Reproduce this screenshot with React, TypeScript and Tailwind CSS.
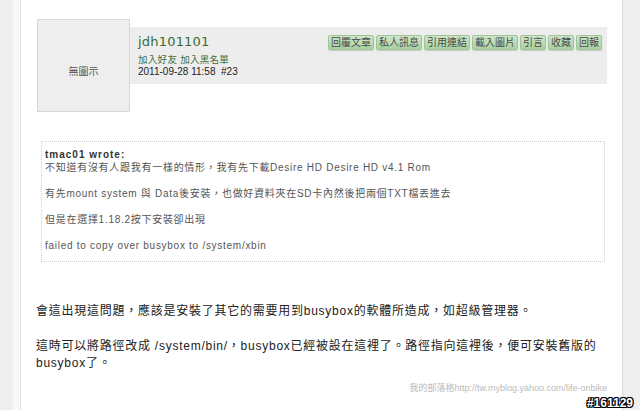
import React from 'react';

const buttons = ['回覆文章', '私人訊息', '引用連結', '載入圖片', '引言', '收藏', '回報'];

const quoteLines = [
  '不知道有沒有人跟我有一樣的情形，我有先下載Desire HD Desire HD v4.1 Rom',
  '',
  '有先mount system 與 Data後安裝，也做好資料夾在SD卡內然後把兩個TXT檔丟進去',
  '',
  '但是在選擇1.18.2按下安裝卻出現',
  '',
  'failed to copy over busybox to /system/xbin',
];

export default function App() {
  return (
    <div className="relative w-[640px] h-[410px] flex bg-[#efefef] overflow-hidden font-['Liberation_Sans','Noto_Sans_CJK_TC',sans-serif]">
      <div className="w-[13px] bg-[#eeeeee]" />
      <div className="w-[8px] bg-[#f8f8f8] border-r border-[#e2e2e2]" />
      <main className="w-[602px] bg-white border-r border-[#dadada] pt-[19px] pl-[16px] pr-[15px]">
        {/* post header */}
        <div className="flex items-start">
          <div className="w-[93px] h-[93px] shrink-0 border border-[#d8d8d8] bg-[#eeeeee] flex items-center justify-center pt-[12px] text-[10px] text-[#555]">
            無圖示
          </div>
          <div className="flex-1 mt-[8px] h-[57px] bg-[#ededed] flex justify-between">
            <div className="pl-[8px] pt-[7px]">
              <div className="font-['DejaVu_Sans',sans-serif] text-[13px] leading-[16px] text-[#3a6b37] tracking-[0.2px]">
                jdh101101
              </div>
              <div className="mt-[4px] text-[9.5px] leading-[12px] text-[#3f6e3c] tracking-[0.3px]">
                加入好友&nbsp;加入黑名單
              </div>
              <div className="text-[10px] leading-[11px] text-[#222]">2011-09-28 11:58&nbsp; #23</div>
            </div>
            <div className="flex gap-[2px] pt-[8px] pr-[5px] items-start">
              {buttons.map((b) => (
                <span
                  key={b}
                  className="h-[15px] px-[2px] flex items-center rounded-[2px] border border-[#9fc496] bg-gradient-to-b from-[#cfe6c8] to-[#a9d0a0] shadow-[0_1px_1px_rgba(0,0,0,0.15)] text-[10px] leading-none text-[#4a4a4a]"
                >
                  {b}
                </span>
              ))}
            </div>
          </div>
        </div>

        {/* quote */}
        <div className="mt-[29px] ml-[4px] mr-[2px] border border-dotted border-[#cfcfcf] pl-[3px] pt-[7px] pb-[9px] text-[10px] tracking-[0.72px] text-[#555]">
          <div className="h-[12px] leading-[12px] font-bold tracking-[1px] text-[#333]">tmac01 wrote:</div>
          {quoteLines.map((l, i) => (
            <div key={i} className="h-[13px] leading-[13px] whitespace-nowrap">
              {l}
            </div>
          ))}
        </div>

        {/* reply body */}
        <div className="mt-[41px] -ml-[1px] text-[12px] leading-[17px] tracking-[0.75px] text-[#222]">
          <p>會這出現這問題，應該是安裝了其它的需要用到busybox的軟體所造成，如超級管理器。</p>
          <p className="h-[18px]" />
          <p>這時可以將路徑改成 /system/bin/，busybox已經被設在這裡了。路徑指向這裡後，便可安裝舊版的busybox了。</p>
        </div>

        <div className="mt-[10px] text-right text-[9px] leading-[12px] text-[#bbbbbb]">
          我的部落格http://tw.myblog.yahoo.com/life-onbike
        </div>
      </main>

      <div className="absolute right-[7px] bottom-[1px] text-[12px] leading-[12px] font-bold text-white [text-shadow:1px_0_0_#000,-1px_0_0_#000,0_1px_0_#000,0_-1px_0_#000,1px_1px_0_#000,-1px_-1px_0_#000,1px_-1px_0_#000,-1px_1px_0_#000]">
        #161129
      </div>
    </div>
  );
}
